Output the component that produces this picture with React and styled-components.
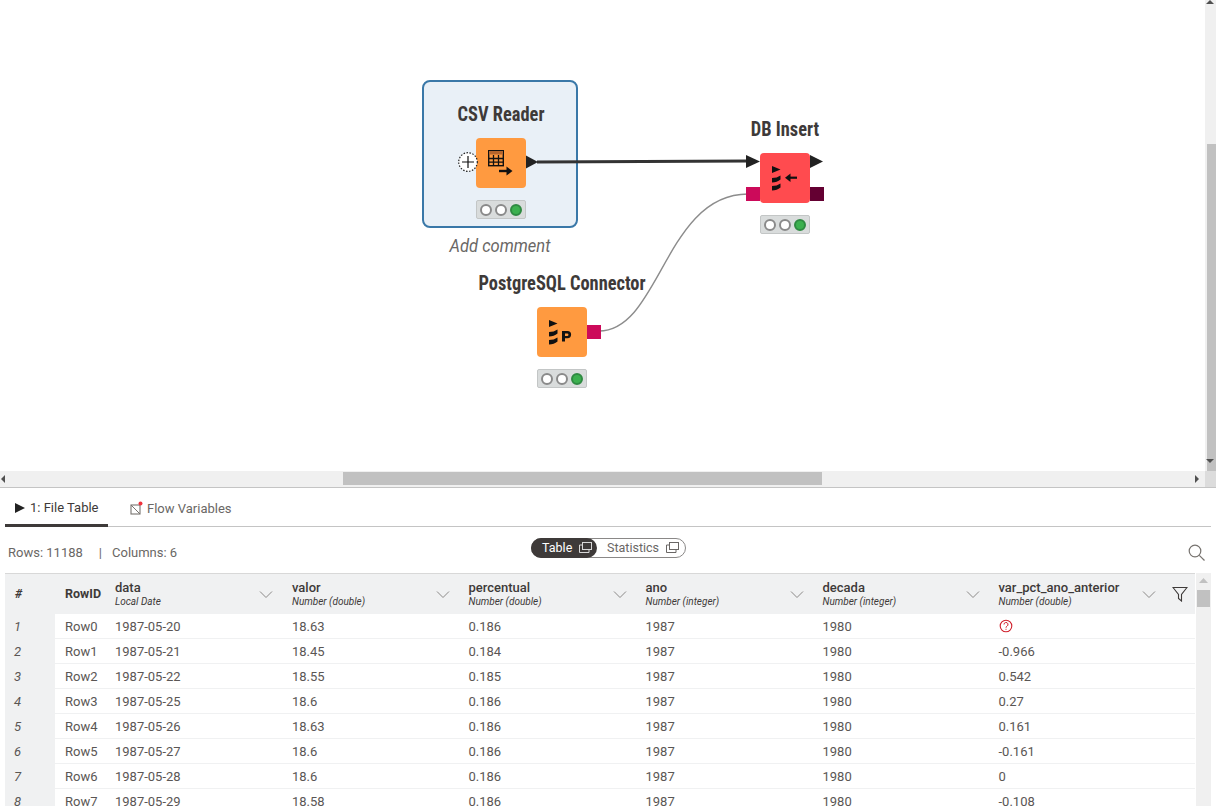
import React from "react";
import styled, { createGlobalStyle } from "styled-components";

const Global = createGlobalStyle`
  html, body { margin: 0; padding: 0; height: 100%; overflow: hidden; background: #fff; }
  body { font-family: Roboto, "Liberation Sans", sans-serif; color: #3e3a39; }
`;

const Page = styled.div`
  width: 1216px;
  height: 806px;
  display: flex;
  flex-direction: column;
  overflow: hidden;
`;
const CanvasRow = styled.div`
  display: flex;
  height: 471px;
  flex: none;
`;
const Canvas = styled.div`
  position: relative;
  flex: 1;
  background: #fff;
  overflow: hidden;
`;
const VTrack = styled.div`
  width: 11px;
  background: #f0f0f0;
  position: relative;
`;
const VThumb = styled.div`
  position: absolute;
  left: 2px;
  right: 0;
  top: 144px;
  bottom: 0;
  background: #c1c1c1;
`;
const ScrollArrow = styled.svg`
  position: absolute;
  fill: #505050;
  left: ${(p) => p.$left}px;
  top: ${(p) => p.$top}px;
`;
const HTrack = styled.div`
  position: relative;
  height: 16px;
  flex: none;
  background: #f0f0f0;
  border-bottom: 1px solid #c4c4c4;
`;
const HThumb = styled.div`
  position: absolute;
  left: 343px;
  width: 479px;
  top: 1px;
  height: 13px;
  background: #c1c1c1;
`;
const HCorner = styled.div`
  position: absolute;
  right: 0;
  top: 0;
  width: 11px;
  bottom: 0;
  background: #dcdcdc;
`;

const SelectBox = styled.div`
  position: absolute;
  left: 422px;
  top: 80px;
  width: 152px;
  height: 144px;
  background: #e9f0f7;
  border: 2px solid #3a78a8;
  border-radius: 8px;
`;
const NodeWrap = styled.div`
  position: absolute;
  left: ${(p) => p.$x}px;
  top: ${(p) => p.$y}px;
  width: 50px;
`;
const NodeLabel = styled.div`
  position: absolute;
  left: 25px;
  top: -36px;
  transform: translateX(-50%) scaleX(0.92);
  white-space: nowrap;
  font-family: "Roboto Condensed", Roboto, sans-serif;
  font-weight: 700;
  font-size: 20px;
  line-height: 24px;
  color: #3e3a39;
`;
const NodeBody = styled.div`
  width: 50px;
  height: 50px;
  border-radius: 4px;
  background: ${(p) => p.$color};
  display: flex;
  align-items: center;
  justify-content: center;
`;
const Traffic = styled.div`
  margin-top: 12px;
  height: 19px;
  box-sizing: border-box;
  background: #d9dcdc;
  border: 1px solid #c3c6c6;
  border-radius: 2px;
  display: flex;
  align-items: center;
  justify-content: center;
  gap: 3px;
`;
const Lamp = styled.span`
  width: 12px;
  height: 12px;
  box-sizing: border-box;
  border-radius: 50%;
  border: 2px solid ${(p) => (p.$on ? "#2f8a42" : "#8a8a8a")};
  background: ${(p) => (p.$on ? "#3cb04f" : "#fff")};
`;
const CommentLabel = styled.div`
  position: absolute;
  left: 500px;
  top: 235px;
  transform: translateX(-50%) scaleX(0.87);
  white-space: nowrap;
  font-style: italic;
  font-size: 19px;
  line-height: 22px;
  color: #6a6765;
`;
const Wires = styled.svg`
  position: absolute;
  left: 0;
  top: 0;
`;
const PortSquare = styled.div`
  position: absolute;
  left: ${(p) => p.$x}px;
  top: ${(p) => p.$y}px;
  width: 14px;
  height: 14px;
  background: ${(p) => p.$color};
`;

const TabBar = styled.div`
  display: flex;
  height: 39px;
  flex: none;
  margin: 0 5px;
  border-bottom: 1px solid #c4c4c4;
  box-sizing: border-box;
  font-size: 13px;
`;
const Tab = styled.div`
  display: flex;
  align-items: center;
  gap: ${(p) => (p.$active ? 5 : 4)}px;
  height: 39px;
  box-sizing: border-box;
  padding: ${(p) => (p.$active ? 3 : 1)}px 0 0 ${(p) => (p.$active ? 10 : 22)}px;
  width: ${(p) => p.$w}px;
  white-space: nowrap;
  color: ${(p) => (p.$active ? "#3e3a39" : "#6a6765")};
  border-bottom: ${(p) => (p.$active ? "3px solid #3e3a39" : "none")};
`;
const Toolbar = styled.div`
  position: relative;
  height: 46px;
  flex: none;
  display: flex;
  align-items: center;
  justify-content: space-between;
  padding: 4px 11px 0 8px;
  box-sizing: border-box;
  font-size: 13px;
  color: #6a6765;
`;
const Stats = styled.div`
  display: flex;
`;
const StatDivider = styled.span`
  margin: 0 10px 0 16px;
`;
const Switch = styled.div`
  position: absolute;
  left: 531px;
  top: 11px;
  width: 155px;
  height: 20px;
  box-sizing: border-box;
  border: 1px solid #8a8887;
  border-radius: 10px;
  display: flex;
  font-size: 12.5px;
`;
const SwitchItem = styled.div`
  display: flex;
  align-items: center;
  gap: 7px;
  height: 20px;
  margin-top: -1px;
  padding: 0 0 1px ${(p) => (p.$active ? 11 : 10)}px;
  box-sizing: border-box;
  width: ${(p) => (p.$active ? 66 : 88)}px;
  margin-left: ${(p) => (p.$active ? "-1px" : "0")};
  border-radius: 10px;
  background: ${(p) => (p.$active ? "#3e3a39" : "transparent")};
  color: ${(p) => (p.$active ? "#fff" : "#6a6765")};
`;

const TableArea = styled.div`
  position: relative;
  margin-left: 5px;
  flex: 1;
  overflow: hidden;
`;
const COLS = "50px 60px 177px 176.5px 177px 177px 176px 197px";
const HeadRow = styled.div`
  display: grid;
  grid-template-columns: ${COLS};
  width: 1190px;
  height: 41px;
  box-sizing: border-box;
  background: #f0f1f2;
  border-top: 1px solid #d8d8d8;
  align-items: center;
`;
const HeadCell = styled.div`
  position: relative;
  padding-left: ${(p) => p.$pad ?? 0}px;
  font-size: 12.5px;
  font-weight: 700;
  line-height: 14px;
  color: #3e3a39;
`;
const HeadTitle = styled.div`
  font-weight: 500;
  font-size: 13px;
  line-height: 14px;
`;
const HeadType = styled.div`
  font-size: 10px;
  font-weight: 400;
  font-style: italic;
  line-height: 13px;
  color: #3e3a39;
`;
const Hash = styled.span`
  font-style: italic;
`;
const Caret = styled.svg`
  position: absolute;
  top: 50%;
  margin-top: -3px;
  right: ${(p) => p.$right}px;
  fill: none;
  stroke: #8a8887;
  stroke-width: 1;
`;
const FilterIcon = styled.svg`
  position: absolute;
  right: 8px;
  top: 50%;
  margin-top: -8px;
  fill: none;
  stroke: #3e3a39;
  stroke-width: 1.1;
`;
const Row = styled.div`
  display: grid;
  grid-template-columns: ${COLS};
  width: 1190px;
  height: 25px;
  box-sizing: border-box;
  align-items: center;
  font-size: 13px;
  color: #5a5654;
  border-bottom: 1px solid #f0f1f2;
`;
const IndexCell = styled.div`
  height: 25px;
  line-height: 25px;
  padding-left: 9px;
  background: #f0f1f2;
  font-style: italic;
  margin-bottom: -1px;
`;
const Cell = styled.div`
  padding-left: ${(p) => p.$pad ?? 0}px;
`;
const MissingIcon = styled.svg`
  display: block;
  fill: none;
  stroke: #d0202c;
`;
const TableScroll = styled.div`
  position: absolute;
  left: 1191px;
  top: 0;
  width: 15px;
  bottom: 0;
  background: #f0f0f0;
`;
const TableThumb = styled.div`
  position: absolute;
  left: 1px;
  right: 1px;
  top: 17px;
  height: 17px;
  background: #c1c1c1;
`;

const rows = [
  ["1987-05-20", "18.63", "0.186", null],
  ["1987-05-21", "18.45", "0.184", "-0.966"],
  ["1987-05-22", "18.55", "0.185", "0.542"],
  ["1987-05-25", "18.6", "0.186", "0.27"],
  ["1987-05-26", "18.63", "0.186", "0.161"],
  ["1987-05-27", "18.6", "0.186", "-0.161"],
  ["1987-05-28", "18.6", "0.186", "0"],
  ["1987-05-29", "18.58", "0.186", "-0.108"],
];

const columns = [
  ["data", "Local Date"],
  ["valor", "Number (double)"],
  ["percentual", "Number (double)"],
  ["ano", "Number (integer)"],
  ["decada", "Number (integer)"],
  ["var_pct_ano_anterior", "Number (double)"],
];

const DbStack = () => (
  <g fill="#111">
    <path d="M12 13 L20.5 16.5 L12 20 Z" />
    <path d="M12 25 Q17 25 20.5 22.5 L20.5 26.5 Q17 29.5 12 29.5 Z" />
    <path d="M12 33 Q17 33 20.5 30.5 L20.5 34.5 Q17 37.5 12 37.5 Z" />
  </g>
);

const CsvIcon = () => (
  <svg width="50" height="50" viewBox="0 0 50 50">
    <rect x="12.7" y="12.7" width="14.6" height="15" fill="#ff9a40" stroke="#111" strokeWidth="1.4" />
    <rect x="13" y="13" width="14" height="3.5" fill="#b5652c" />
    <path d="M17.5 17v10.5M22.5 17v10.5M13 20.5h14M13 24.2h14" stroke="#111" strokeWidth="1.3" />
    <path d="M23 33h9" stroke="#111" strokeWidth="2.4" />
    <path d="M30.5 28.5l6 4.5-6 4.5z" fill="#111" />
  </svg>
);

const InsertIcon = () => (
  <svg width="50" height="50" viewBox="0 0 50 50">
    <DbStack />
    <path d="M28 24.7h9" stroke="#111" strokeWidth="2.2" />
    <path d="M30.5 20.5l-5.5 4.2 5.5 4.2z" fill="#111" />
  </svg>
);

const PostgresIcon = () => (
  <svg width="50" height="50" viewBox="0 0 50 50">
    <DbStack />
    <path
      fillRule="evenodd"
      fill="#111"
      d="M25 24h5.5a3.6 3.6 0 0 1 0 7.2H28v3.3h-3zM28 26.4v2.5h2.2a1.25 1.25 0 0 0 0-2.5z"
    />
  </svg>
);

const Node = ({ x, y, label, color, children }) => (
  <NodeWrap $x={x} $y={y}>
    <NodeLabel>{label}</NodeLabel>
    <NodeBody $color={color}>{children}</NodeBody>
    <Traffic>
      <Lamp />
      <Lamp />
      <Lamp $on />
    </Traffic>
  </NodeWrap>
);

const CopyIcon = ({ color }) => (
  <svg width="13" height="11" viewBox="0 0 13 11" fill="none" stroke={color} strokeWidth="1">
    <rect x="3.5" y="0.5" width="9" height="7" />
    <path d="M3.5 3H0.5V10.5H10V7.5" />
  </svg>
);

export default function App() {
  return (
    <Page>
      <Global />
      <CanvasRow>
        <Canvas>
          <SelectBox />
          <CommentLabel>Add comment</CommentLabel>
          <Wires width="1205" height="471">
            <path d="M537 162 L748 161" stroke="#333" strokeWidth="3" fill="none" />
            <path
              d="M599 331 C660 331 665 194 748 194"
              stroke="#8c8c8c"
              strokeWidth="1.4"
              fill="none"
            />
            <path d="M525 155 L538 162 L525 169 Z" fill="#222" />
            <path d="M746 155 L760 161.5 L746 168 Z" fill="#222" />
            <path d="M810 155 L823 161.5 L810 168 Z" fill="#222" />
          </Wires>
          <PortSquare $x={746} $y={187} $color="#cc0a5a" />
          <PortSquare $x={810} $y={187} $color="#640032" />
          <PortSquare $x={587} $y={325} $color="#cc0a5a" />
          <Node x={476} y={138} label="CSV Reader" color="#ff9a40">
            <CsvIcon />
          </Node>
          <Node x={760} y={153} label="DB Insert" color="#ff4b4f">
            <InsertIcon />
          </Node>
          <Node x={537} y={307} label="PostgreSQL Connector" color="#ff9a40">
            <PostgresIcon />
          </Node>
          <Wires width="1205" height="471">
            <circle cx="468" cy="162" r="9.3" fill="#fff" stroke="#222" strokeWidth="1.2" strokeDasharray="1.5 1.5" />
            <path d="M462 162h12M468 156v12" stroke="#111" strokeWidth="1.2" />
          </Wires>
        </Canvas>
        <VTrack>
          <VThumb />
          <ScrollArrow $left={1} $top={0} width="8" height="5" viewBox="0 0 8 5">
            <path d="M4 0l4 4H0z" />
          </ScrollArrow>
          <ScrollArrow $left={1} $top={459} width="8" height="5" viewBox="0 0 8 5">
            <path d="M0 0h8L4 4z" />
          </ScrollArrow>
        </VTrack>
      </CanvasRow>
      <HTrack>
        <HThumb />
        <HCorner />
        <ScrollArrow $left={1} $top={4} width="5" height="8" viewBox="0 0 5 8">
          <path d="M4 0v8L0 4z" />
        </ScrollArrow>
        <ScrollArrow $left={1195} $top={4} width="5" height="8" viewBox="0 0 5 8">
          <path d="M0 0v8l4-4z" />
        </ScrollArrow>
      </HTrack>
      <TabBar>
        <Tab $active $w={103}>
          <svg width="10" height="10" viewBox="0 0 10 10">
            <path d="M0 0l10 5-10 5z" fill="#222" />
          </svg>
          1: File Table
        </Tab>
        <Tab $w={140}>
          <svg width="13" height="14" viewBox="0 0 13 14" fill="none">
            <rect x="1" y="4" width="9" height="9" stroke="#77736f" strokeWidth="1.1" />
            <path d="M1 4l9 9" stroke="#77736f" strokeWidth="1" />
            <circle cx="10.5" cy="2.5" r="2" fill="#f0323c" />
          </svg>
          Flow Variables
        </Tab>
      </TabBar>
      <Toolbar>
        <Stats>
          <span>Rows: 11188</span>
          <StatDivider>|</StatDivider>
          <span>Columns: 6</span>
        </Stats>
        <Switch>
          <SwitchItem $active>
            Table
            <CopyIcon color="#d8d8d8" />
          </SwitchItem>
          <SwitchItem>
            Statistics
            <CopyIcon color="#6a6765" />
          </SwitchItem>
        </Switch>
        <svg width="17" height="17" viewBox="0 0 17 17" fill="none" stroke="#77736f" strokeWidth="1.2">
          <circle cx="7" cy="7" r="5.8" />
          <path d="M11.3 11.3L16.5 16.5" />
        </svg>
      </Toolbar>
      <TableArea>
        <HeadRow>
          <HeadCell $pad={10}>
            <Hash>#</Hash>
          </HeadCell>
          <HeadCell $pad={10}>RowID</HeadCell>
          {columns.map(([name, type], i) => (
            <HeadCell key={name}>
              <HeadTitle>{name}</HeadTitle>
              <HeadType>{type}</HeadType>
              <Caret $right={i === 5 ? 40 : 19} width="14" height="7" viewBox="0 0 14 7">
                <path d="M1 0.5L7 6.5L13 0.5" />
              </Caret>
              {i === 5 && (
                <FilterIcon width="16" height="16" viewBox="0 0 16 16">
                  <path d="M1 1.5H15L9.5 8.5V15L6.5 12.5V8.5Z" />
                </FilterIcon>
              )}
            </HeadCell>
          ))}
        </HeadRow>
        {rows.map((r, i) => (
          <Row key={i}>
            <IndexCell>{i + 1}</IndexCell>
            <Cell $pad={10}>Row{i}</Cell>
            <Cell>{r[0]}</Cell>
            <Cell>{r[1]}</Cell>
            <Cell>{r[2]}</Cell>
            <Cell>1987</Cell>
            <Cell>1980</Cell>
            <Cell>
              {r[3] ?? (
                <MissingIcon width="14" height="14" viewBox="0 0 14 14">
                  <circle cx="7" cy="7" r="5.8" strokeWidth="1.1" />
                  <path d="M5 5.5a2 2 0 1 1 3 1.7c-.7.4-1 .8-1 1.5" strokeWidth="1" />
                  <path d="M7 9.8v1" strokeWidth="1" />
                </MissingIcon>
              )}
            </Cell>
          </Row>
        ))}
        <TableScroll>
          <ScrollArrow $left={3} $top={5} width="9" height="5" viewBox="0 0 9 5">
            <path d="M4.5 0L9 5H0z" fill="#c1c1c1" />
          </ScrollArrow>
          <TableThumb />
        </TableScroll>
      </TableArea>
    </Page>
  );
}
